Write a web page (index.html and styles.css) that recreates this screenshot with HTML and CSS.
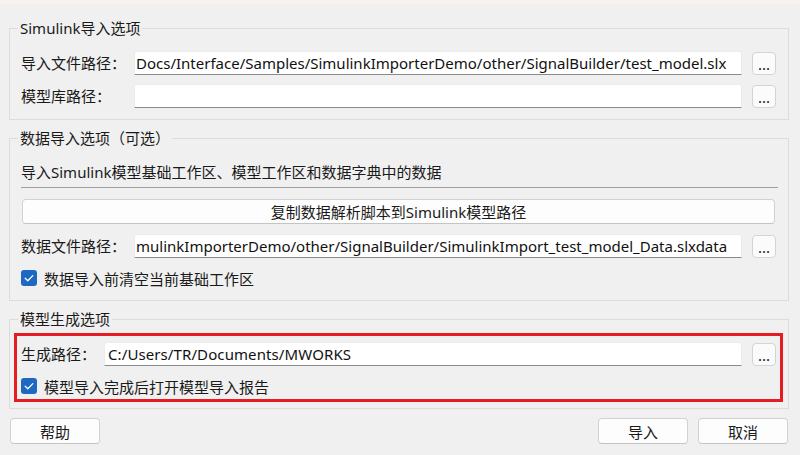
FILE: index.html
```html
<!DOCTYPE html>
<html lang="zh-CN">
    <head>
        <meta charset="UTF-8">
        <title>Simulink导入</title>
        <link rel="stylesheet" href="styles.css">
    </head>
    <body>
        <div class="faixa-topo"></div>

        <main class="dialogo">
            <fieldset class="grupo grupo-simulink">
                <legend>Simulink导入选项</legend>
                <div class="linha">
                    <label class="rotulo">导入文件路径：</label>
                    <input class="caminho rolado" type="text" value="Docs/Interface/Samples/SimulinkImporterDemo/other/SignalBuilder/test_model.slx">
                    <button class="procurar">...</button>
                </div>
                <div class="linha">
                    <label class="rotulo">模型库路径：</label>
                    <input class="caminho" type="text" value="">
                    <button class="procurar">...</button>
                </div>
            </fieldset>

            <fieldset class="grupo grupo-dados">
                <legend>数据导入选项（可选）</legend>
                <p class="descricao">导入Simulink模型基础工作区、模型工作区和数据字典中的数据</p>
                <hr class="separador">
                <button class="botao botao-largo">复制数据解析脚本到Simulink模型路径</button>
                <div class="linha">
                    <label class="rotulo">数据文件路径：</label>
                    <input class="caminho rolado" type="text" value="mulinkImporterDemo/other/SignalBuilder/SimulinkImport_test_model_Data.slxdata">
                    <button class="procurar">...</button>
                </div>
                <label class="marcador">
                    <span class="caixa">
                        <svg viewBox="0 0 16 16" width="16" height="16"><path d="M4.2 8.3 L6.8 10.8 L11.8 5.6" fill="none" stroke="#fff" stroke-width="1.3" stroke-linecap="round" stroke-linejoin="round"/></svg>
                    </span>
                    数据导入前清空当前基础工作区
                </label>
            </fieldset>

            <fieldset class="grupo grupo-gerar">
                <legend>模型生成选项</legend>
                <div class="destaque">
                    <div class="linha linha-curta">
                        <label class="rotulo">生成路径：</label>
                        <input class="caminho" type="text" value="C:/Users/TR/Documents/MWORKS">
                        <button class="procurar">...</button>
                    </div>
                    <label class="marcador">
                        <span class="caixa">
                            <svg viewBox="0 0 16 16" width="16" height="16"><path d="M4.2 8.3 L6.8 10.8 L11.8 5.6" fill="none" stroke="#fff" stroke-width="1.3" stroke-linecap="round" stroke-linejoin="round"/></svg>
                        </span>
                        模型导入完成后打开模型导入报告
                    </label>
                </div>
            </fieldset>

            <footer class="acoes">
                <button class="botao botao-acao">帮助</button>
                <span class="espaco"></span>
                <button class="botao botao-acao">导入</button>
                <button class="botao botao-acao">取消</button>
            </footer>
        </main>
    </body>
</html>
```

FILE: styles.css
```css
* {
    padding: 0px;
    margin: 0px;
    box-sizing: border-box;
    outline: 0;
    font-family: "Noto Sans", "Noto Sans CJK SC", sans-serif;
    font-size: 15px;
    color: #1a1a1a;
}

body {
    background-color: #f0f0f0;
    width: 800px;
    height: 455px;
    overflow: hidden;
}

.faixa-topo {
    height: 4px;
    background-color: #f6f3f1;
}

.dialogo {
    padding: 14px 11px 0 9px;
}

.grupo {
    border: 1px solid #dcdcdc;
    padding: 13px 12px 11px 11px;
}

.grupo legend {
    margin-left: -3px;
    padding: 0 2px;
    line-height: 20px;
    height: 20px;
}

.grupo-dados,
.grupo-gerar {
    margin-top: 8px;
}

.linha {
    display: grid;
    grid-template-columns: 113px 1fr 24px;
    column-gap: 10px;
    align-items: center;
    height: 24px;
}

.linha + .linha {
    margin-top: 9px;
}

.linha .caminho {
    margin-left: -10px;
}

.linha-curta {
    grid-template-columns: 83px 1fr 24px;
}

.rotulo {
    white-space: nowrap;
    line-height: 24px;
}

.caminho {
    height: 24px;
    background-color: #fff;
    border: 1px solid #ececec;
    border-bottom-color: #8a8a8a;
    border-radius: 3px 3px 0 0;
    padding: 0 3px;
    line-height: 22px;
    color: #111;
    letter-spacing: 0.1px;
}

.caminho.rolado {
    padding-left: 1px;
    letter-spacing: 0;
}

.procurar {
    width: 24px;
    height: 23px;
    background-color: #fbfbfb;
    border: 1px solid #d4d4d4;
    border-radius: 4px;
    font-size: 15px;
    line-height: 14px;
    padding-top: 2px;
}

.botao {
    background-color: #fdfdfd;
    border: 1px solid #d2d2d2;
    border-bottom-color: #c4c4c4;
    border-radius: 4px;
}

.grupo-dados {
    padding-top: 12px;
    padding-bottom: 10px;
}

.descricao {
    line-height: 24px;
    height: 24px;
}

.separador {
    border: none;
    border-top: 1px solid #a0a0a0;
    margin-top: 3px;
    margin-right: -2px;
}

.botao-largo {
    display: block;
    width: 753px;
    height: 25px;
    margin-top: 11px;
    margin-left: 1px;
}

.grupo-dados .linha {
    margin-top: 10px;
}

.marcador {
    display: flex;
    align-items: center;
    gap: 7px;
    height: 24px;
    margin-top: 8px;
}

.caixa {
    width: 16px;
    height: 16px;
    border-radius: 3px;
    background-color: #1d68c0;
    display: flex;
}

.grupo-gerar {
    padding: 4px 5px 6px 4px;
}

.grupo-gerar legend {
    margin-left: 4px;
}

.destaque {
    border: 3px solid #e51c23;
    padding: 6px 4px 1px 4px;
}

.acoes {
    display: flex;
    gap: 10px;
    margin-top: 9px;
    padding: 0 1px;
}

.espaco {
    flex: 1;
}

.botao-acao {
    width: 90px;
    height: 26px;
}
```
